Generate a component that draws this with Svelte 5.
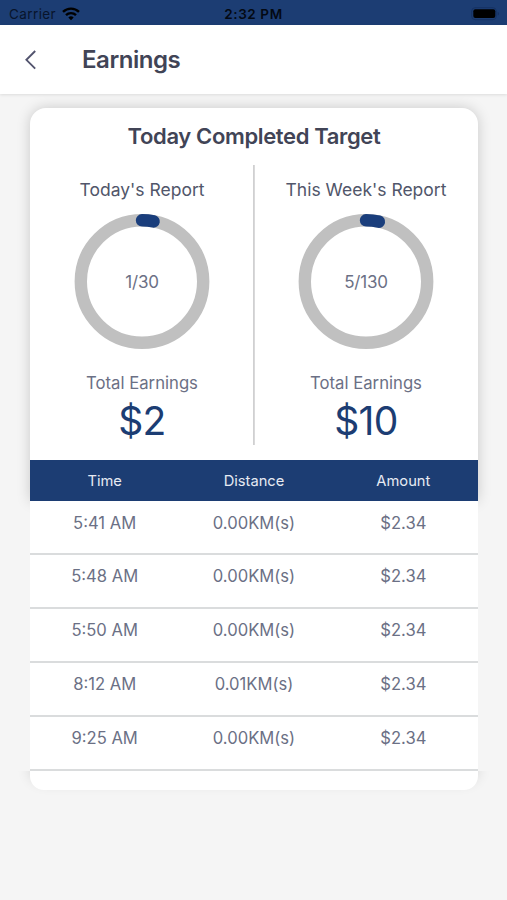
<script lang="ts">
  const reports = [
    { title: "Today's Report", progress: "1/30", percent: 3.05, earnings: "$2" },
    { title: "This Week's Report", progress: "5/130", percent: 3.4, earnings: "$10" },
  ];

  const columns = ["Time", "Distance", "Amount"];

  const trips = [
    { time: "5:41 AM", distance: "0.00KM(s)", amount: "$2.34" },
    { time: "5:48 AM", distance: "0.00KM(s)", amount: "$2.34" },
    { time: "5:50 AM", distance: "0.00KM(s)", amount: "$2.34" },
    { time: "8:12 AM", distance: "0.01KM(s)", amount: "$2.34" },
    { time: "9:25 AM", distance: "0.00KM(s)", amount: "$2.34" },
  ];
</script>

<main>
  <div class="status">
    <div class="carrier">
      <span>Carrier</span>
      <svg width="18" height="14" viewBox="0 0 18 14">
        <g fill="none" stroke="#000" stroke-width="2.4">
          <path d="M1 4.9a11.4 11.4 0 0 1 16 0" />
          <path d="M4 8.2a7.1 7.1 0 0 1 10 0" />
        </g>
        <path d="M6.3 10.6a3.9 3.9 0 0 1 5.4 0L9 13.3z" />
      </svg>
    </div>
    <span class="clock">2:32 PM</span>
    <svg class="battery" width="29" height="14" viewBox="0 0 29 14">
      <rect x="0.7" y="0.7" width="24.6" height="12" rx="3.4" fill="none" stroke="#163263" />
      <rect x="2.3" y="2.3" width="22" height="8.8" rx="2" />
      <path d="M26.6 4.8v3.8q1.5-.5 1.5-1.9t-1.5-1.9" fill="#163263" />
    </svg>
  </div>

  <header>
    <button aria-label="Back">
      <svg width="14" height="20" viewBox="0 0 14 20">
        <path d="M12.2 1 3.4 9.8l8.8 8.8" fill="none" stroke="#53546e" stroke-width="1.9" />
      </svg>
    </button>
    <h1>Earnings</h1>
  </header>

  <div class="content">
    <section class="card">
      <h2>Today Completed Target</h2>
      <div class="reports">
        {#each reports as report (report.title)}
          <div class="report">
            <h3>{report.title}</h3>
            <div class="ring">
              <svg width="136" height="136" viewBox="0 0 136 136">
                <circle class="track" cx="68" cy="68.5" r="61.2" />
                <circle
                  class="progress"
                  cx="68"
                  cy="68.5"
                  r="61.2"
                  pathLength="100"
                  stroke-dasharray={`${report.percent} 100`}
                  transform="rotate(-90 68 68.5)"
                />
              </svg>
              <span>{report.progress}</span>
            </div>
            <p class="label">Total Earnings</p>
            <p class="total">{report.earnings}</p>
          </div>
        {/each}
      </div>
      <div class="row head">
        {#each columns as column (column)}
          <span>{column}</span>
        {/each}
      </div>
    </section>

    <div class="trips">
      {#each trips as trip (trip.time)}
        <div class="row trip">
          <span>{trip.time}</span>
          <span>{trip.distance}</span>
          <span>{trip.amount}</span>
        </div>
      {/each}
    </div>
    <div class="footer"><div class="cap"></div></div>
  </div>
</main>

<style>
  :global(body) {
    background: #f5f5f5;
  }

  main {
    height: 900px;
    overflow: hidden;
    background: #f5f5f5;
    color: #6b7085;
    font-family: Inter, "Liberation Sans", sans-serif;
  }

  h1,
  h2,
  h3,
  p {
    margin: 0;
  }

  svg {
    display: block;
  }

  .status {
    height: 25px;
    background: #1c3d73;
    color: #000;
    display: grid;
    grid-template-columns: 1fr auto 1fr;
    align-items: center;
    padding: 2px 7px 0 9px;
    box-sizing: border-box;
    font-size: 13.5px;
  }

  .carrier {
    display: flex;
    align-items: center;
    gap: 6px;
    color: #08142b;
    letter-spacing: 0.4px;
  }

  .clock {
    margin-left: -2px;
    font-weight: 600;
    letter-spacing: 0.6px;
    color: #030913;
  }

  .battery {
    justify-self: end;
  }

  header {
    position: relative;
    height: 69px;
    background: #fff;
    display: flex;
    align-items: center;
    box-shadow: 0 1px 3px rgba(0, 0, 0, 0.1);
  }

  button {
    width: 82px;
    padding: 0 0 0 23px;
    border: none;
    background: none;
  }

  h1 {
    font-size: 24px;
    font-weight: 580;
    letter-spacing: -0.45px;
    color: #414456;
  }

  .content {
    padding: 14px 29px 0 30px;
  }

  .card {
    height: 393px;
    background: #fff;
    border-radius: 16px 16px 0 0;
    box-shadow: 0 0 14px rgba(0, 0, 0, 0.18);
    display: flex;
    flex-direction: column;
  }

  h2 {
    padding-top: 14px;
    height: 43px;
    line-height: 28px;
    text-align: center;
    font-size: 22px;
    font-weight: 580;
    letter-spacing: -0.36px;
    color: #414456;
  }

  .reports {
    height: 280px;
    display: flex;
    margin-bottom: 15px;
  }

  .report {
    flex: 1;
    display: flex;
    flex-direction: column;
    align-items: center;
  }

  .report + .report {
    box-shadow: -1px 0 #d0d0d1, inset 1px 0 #d9d9da;
  }

  h3 {
    margin-top: 13px;
    line-height: 24px;
    font-size: 17.5px;
    font-weight: 400;
    color: #51566a;
  }

  .ring {
    margin-top: 11px;
    display: grid;
    place-items: center;
    font-size: 17px;
    letter-spacing: -0.2px;
  }

  .ring > * {
    grid-area: 1 / 1;
  }

  .ring span {
    padding-top: 2px;
  }

  circle {
    fill: none;
    stroke-width: 12.4;
  }

  .track {
    stroke: #c0c0c0;
  }

  .progress {
    stroke: #1a3e7c;
    stroke-linecap: round;
  }

  .label {
    margin-top: 22px;
    line-height: 24px;
    font-size: 16.7px;
  }

  .total {
    line-height: 52px;
    font-size: 39px;
    font-weight: 370;
    letter-spacing: -0.6px;
    color: #1c3d73;
  }

  .row {
    display: grid;
    grid-template-columns: repeat(3, 1fr);
    text-align: center;
  }

  .head {
    height: 41px;
    line-height: 42px;
    background: #1c3d73;
    color: #e6eaf2;
    font-size: 14.7px;
  }

  .trips {
    position: relative;
    padding-top: 0.6px;
    background: #fff;
  }

  .trip {
    box-sizing: border-box;
    height: 53.8px;
    line-height: 42px;
    font-size: 16.6px;
    border-bottom: 2px solid #dadcdd;
  }

  .footer {
    margin: 0 -16px;
    padding: 0 16px 20px;
    overflow: hidden;
  }

  .cap {
    height: 19.4px;
    background: #fff;
    border-radius: 0 0 14px 14px;
    box-shadow: 0 -8px 14px rgba(0, 0, 0, 0.16);
  }
</style>
